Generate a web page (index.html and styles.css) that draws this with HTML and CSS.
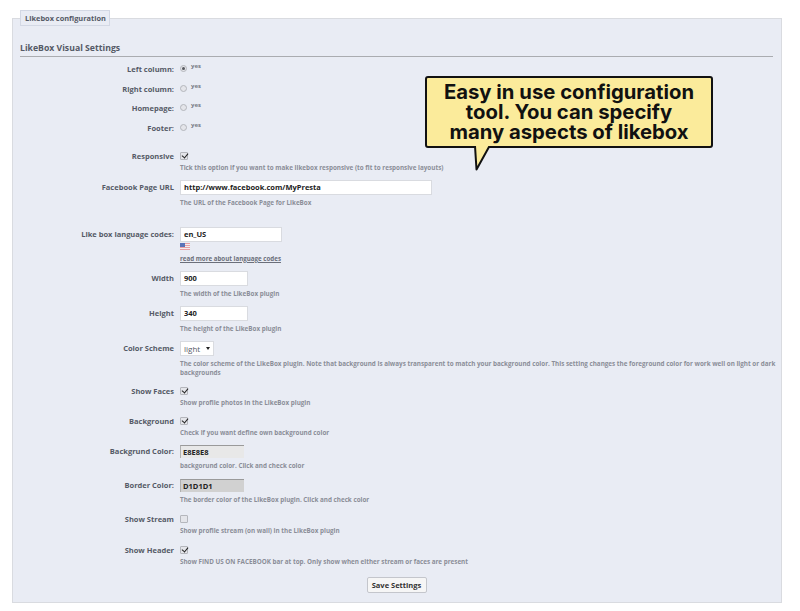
FILE: index.html
```html
<!DOCTYPE html>
<html>
<head>
  <title>Likebox configuration</title>
  <link rel="stylesheet" href="styles.css">
</head>
<body>
  <form>
    <fieldset class="panel">
      <legend>Likebox configuration</legend>
      <h3 class="section-title">LikeBox Visual Settings</h3>

      <div class="callout">
        <p>Easy in use configuration<br>tool. You can specify<br>many aspects of likebox</p>
        <svg class="callout-tail" width="20" height="26" viewBox="0 0 20 26">
          <path d="M1 0 L2.5 23.5 L15.5 0" fill="#fbeb9b" stroke="#111111" stroke-width="2" stroke-linejoin="round"/>
        </svg>
      </div>

      <div class="radio-row">
        <label class="row-label">Left column:</label>
        <div class="row-field"><input type="radio" checked><span class="yes">yes</span></div>
      </div>
      <div class="radio-row">
        <label class="row-label">Right column:</label>
        <div class="row-field"><input type="radio"><span class="yes">yes</span></div>
      </div>
      <div class="radio-row">
        <label class="row-label">Homepage:</label>
        <div class="row-field"><input type="radio"><span class="yes">yes</span></div>
      </div>
      <div class="radio-row">
        <label class="row-label">Footer:</label>
        <div class="row-field"><input type="radio"><span class="yes">yes</span></div>
      </div>

      <div class="row check-row gap-wide">
        <label class="row-label">Responsive</label>
        <div class="row-field">
          <input type="checkbox" checked>
          <p class="help">Tick this option if you want to make likebox responsive (to fit to responsive layouts)</p>
        </div>
      </div>

      <div class="row">
        <label class="row-label">Facebook Page URL</label>
        <div class="row-field">
          <input class="text-input url-input" type="text" value="http://www.facebook.com/MyPresta">
          <p class="help">The URL of the Facebook Page for LikeBox</p>
        </div>
      </div>

      <div class="row lang-row">
        <label class="row-label">Like box language codes:</label>
        <div class="row-field">
          <input class="text-input lang-input" type="text" value="en_US">
          <svg class="flag" width="10" height="7" viewBox="0 0 10 7">
            <rect width="10" height="7" fill="#e8a0a4"/>
            <path d="M0 1.5h10M0 3.5h10M0 5.5h10" stroke="#f4eef0" stroke-width="1"/>
            <rect width="5" height="4" fill="#5b74b8"/>
          </svg>
          <a class="lang-link" href="#">read more about language codes</a>
        </div>
      </div>

      <div class="row">
        <label class="row-label">Width</label>
        <div class="row-field">
          <input class="text-input size-input" type="text" value="900">
          <p class="help">The width of the LikeBox plugin</p>
        </div>
      </div>

      <div class="row">
        <label class="row-label">Height</label>
        <div class="row-field">
          <input class="text-input size-input" type="text" value="340">
          <p class="help">The height of the LikeBox plugin</p>
        </div>
      </div>

      <div class="row">
        <label class="row-label">Color Scheme</label>
        <div class="row-field">
          <div class="select-box">light<span class="select-arrow"></span></div>
          <p class="help help-long">The color scheme of the LikeBox plugin. Note that background is always transparent to match your background color. This setting changes the foreground color for work well on light or dark backgrounds</p>
        </div>
      </div>

      <div class="row check-row">
        <label class="row-label">Show Faces</label>
        <div class="row-field">
          <input type="checkbox" checked>
          <p class="help">Show profile photos in the LikeBox plugin</p>
        </div>
      </div>

      <div class="row check-row">
        <label class="row-label">Background</label>
        <div class="row-field">
          <input type="checkbox" checked>
          <p class="help">Check if you want define own background color</p>
        </div>
      </div>

      <div class="row gap-tight">
        <label class="row-label">Backgrund Color:</label>
        <div class="row-field">
          <input class="color-input color-bg" type="text" value="E8E8E8">
          <p class="help">backgorund color. Click and check color</p>
        </div>
      </div>

      <div class="row">
        <label class="row-label">Border Color:</label>
        <div class="row-field">
          <input class="color-input color-border" type="text" value="D1D1D1">
          <p class="help">The border color of the LikeBox plugin. Click and check color</p>
        </div>
      </div>

      <div class="row check-row gap-wide">
        <label class="row-label">Show Stream</label>
        <div class="row-field">
          <input type="checkbox">
          <p class="help">Show profile stream (on wall) in the LikeBox plugin</p>
        </div>
      </div>

      <div class="row check-row gap-wide">
        <label class="row-label">Show Header</label>
        <div class="row-field">
          <input type="checkbox" checked>
          <p class="help">Show FIND US ON FACEBOOK bar at top. Only show when either stream or faces are present</p>
        </div>
      </div>

      <div class="actions">
        <button class="save-button" type="button">Save Settings</button>
      </div>
    </fieldset>
  </form>
</body>
</html>
```

FILE: styles.css
```css
* {
  box-sizing: border-box;
}

body {
  margin: 0;
  padding: 10px 18px 8px 12px;
  background-color: #ffffff;
  font-family: "Open Sans", sans-serif;
  color: #555a66;
}

.panel {
  position: relative;
  height: 593px;
  margin: 0;
  padding: 0 8px 0 7px;
  background-color: #e9ecf4;
  border: 1px solid #d9dbe0;
  min-width: 0;
}

.panel legend {
  width: 90px;
  height: 16px;
  padding: 0 4px;
  background-color: #e9ecf4;
  border: 1px solid #d3d8e4;
  font-size: 7.4px;
  font-weight: 700;
  line-height: 14px;
  white-space: nowrap;
}

.section-title {
  height: 31px;
  margin: 0 0 5px 0;
  padding-top: 15px;
  border-bottom: 1px solid #aaacb0;
  font-size: 8.7px;
  font-weight: 700;
  line-height: 14px;
}

.radio-row {
  display: flex;
  gap: 6px;
  height: 19.67px;
}

.radio-row .row-field {
  display: flex;
  align-items: flex-start;
}

.row {
  display: flex;
  gap: 6px;
  margin-top: 8px;
}

.gap-wide {
  margin-top: 9px;
}

.gap-tight {
  margin-top: 7px;
}

.lang-row {
  margin-top: 20px;
}

.row-label {
  flex: none;
  width: 154px;
  font-size: 7.5px;
  font-weight: 700;
  line-height: 15px;
  text-align: right;
}

.radio-row .row-label {
  line-height: 14px;
}

.check-row .row-label {
  line-height: 12px;
}

.row-field {
  flex: 1;
  min-width: 0;
}

.yes {
  margin-left: 4px;
  font-size: 6px;
  font-weight: 700;
  line-height: 9px;
  color: #777b86;
}

.help {
  margin: 3px 0 0 0;
  font-size: 6.3px;
  font-weight: 700;
  line-height: 9px;
  color: #8b8e98;
}

.help-long {
  margin-right: -8px;
}

input[type="radio"],
input[type="checkbox"] {
  appearance: none;
  position: relative;
  display: block;
  flex: none;
  width: 8px;
  height: 8px;
  margin: 2px 0 0 0;
  background-color: #e4e5ea;
  border: 1px solid #b4b6bc;
}

input[type="radio"] {
  width: 7px;
  height: 7px;
  margin: 3px 0 0 0;
  border-radius: 50%;
}

input[type="radio"]:checked::before {
  content: "";
  position: absolute;
  left: 1px;
  top: 1px;
  width: 3px;
  height: 3px;
  border-radius: 50%;
  background-color: #55575e;
}

input[type="checkbox"] {
  border-radius: 1px;
}

input[type="checkbox"]:checked::before {
  content: "";
  position: absolute;
  left: 1.5px;
  top: -0.5px;
  width: 3px;
  height: 5px;
  border-right: 1.5px solid #222222;
  border-bottom: 1.5px solid #222222;
  transform: rotate(40deg);
}

.text-input {
  display: block;
  height: 15px;
  padding: 0 3px;
  background-color: #ffffff;
  border: 1px solid #d9dbe0;
  font-family: "Open Sans", sans-serif;
  font-size: 7.5px;
  font-weight: 700;
  color: #222222;
}

.url-input {
  width: 252px;
}

.lang-input {
  width: 102px;
}

.size-input {
  width: 68px;
}

.flag {
  display: block;
  margin-top: 1px;
}

.lang-link {
  display: block;
  margin-top: 4px;
  font-size: 6.2px;
  font-weight: 700;
  line-height: 9px;
  color: #6b6f7a;
}

.select-box {
  display: flex;
  justify-content: space-between;
  align-items: center;
  width: 34px;
  height: 15px;
  padding: 0 3px;
  background-color: #ffffff;
  border: 1px solid #d9dbe0;
  font-size: 8px;
  color: #555a66;
}

.select-arrow {
  width: 0;
  height: 0;
  border-left: 2px solid transparent;
  border-right: 2px solid transparent;
  border-top: 3px solid #222222;
}

.color-input {
  display: block;
  width: 64px;
  height: 13px;
  margin-top: 1px;
  margin-bottom: 1px;
  padding: 0 2px;
  border: none;
  border-top: 1px solid #9a9a9a;
  border-left: 1px solid #b0b0b0;
  font-family: "Open Sans", sans-serif;
  font-size: 7.5px;
  font-weight: 700;
  color: #222222;
}

.color-bg {
  background-color: #e8e8e8;
}

.color-border {
  background-color: #d1d1d1;
}

.actions {
  margin-top: 5px;
  text-align: center;
}

.save-button {
  width: 60px;
  height: 16px;
  padding: 0;
  background-color: #f6f6f6;
  border: 1px solid #c4c6cc;
  border-radius: 2px;
  font-family: "Open Sans", sans-serif;
  font-size: 7.5px;
  font-weight: 700;
  color: #333333;
}

.callout {
  position: absolute;
  left: 412px;
  top: 50px;
  width: 288px;
  height: 72px;
  background-color: #fbeb9b;
  border: 2px solid #111111;
  border-radius: 3px;
}

.callout p {
  margin: 0;
  padding-top: 4px;
  font-family: Inter, sans-serif;
  font-size: 20.3px;
  font-weight: 700;
  line-height: 20px;
  text-align: center;
  color: #111111;
}

.callout-tail {
  position: absolute;
  left: 47px;
  top: 68px;
}
```
